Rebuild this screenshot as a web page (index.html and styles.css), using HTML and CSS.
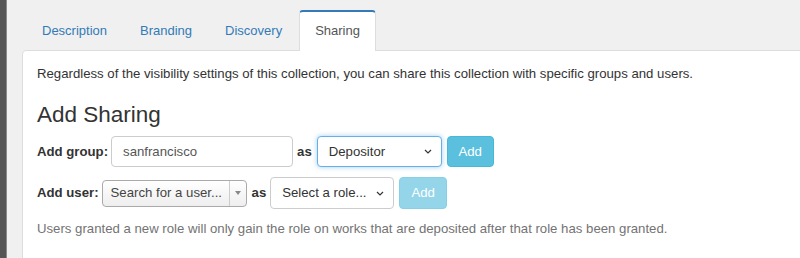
FILE: index.html
```html
<!DOCTYPE html>
<html>
<head>
<meta charset="utf-8">
<link rel="stylesheet" href="styles.css">
</head>
<body>
<div class="sidebar"></div>
<div class="main">
  <ul class="tabs">
    <li class="tab"><a>Description</a></li>
    <li class="tab"><a>Branding</a></li>
    <li class="tab"><a>Discovery</a></li>
    <li class="tab active"><a>Sharing</a></li>
  </ul>
  <div class="panel">
    <p class="intro">Regardless of the visibility settings of this collection, you can share this collection with specific groups and users.</p>
    <h3 class="title">Add Sharing</h3>
    <div class="row row-group">
      <label class="lbl">Add group:</label>
      <div class="input group-input">sanfrancisco</div>
      <span class="lbl">as</span>
      <div class="select focus role-group"><span>Depositor</span>
        <svg class="chev" width="8" height="5" viewBox="0 0 8 5"><path d="M1 1 L4 4 L7 1" fill="none" stroke="#333" stroke-width="1.2"/></svg>
      </div>
      <button class="btn">Add</button>
    </div>
    <div class="row row-user">
      <label class="lbl">Add user:</label>
      <div class="s2"><span class="s2-text">Search for a user...</span><span class="s2-arrow"><svg width="6" height="4" viewBox="0 0 6 4"><path d="M0 0 L6 0 L3 4 Z" fill="#888"/></svg></span></div>
      <span class="lbl as-user">as</span>
      <div class="select role-user"><span>Select a role...</span>
        <svg class="chev" width="8" height="5" viewBox="0 0 8 5"><path d="M1 1 L4 4 L7 1" fill="none" stroke="#333" stroke-width="1.2"/></svg>
      </div>
      <button class="btn disabled">Add</button>
    </div>
    <p class="help">Users granted a new role will only gain the role on works that are deposited after that role has been granted.</p>
  </div>
</div>
</body>
</html>
```
FILE: styles.css
```css
html, body {
  margin: 0;
  height: 258px;
  overflow: hidden;
}
body {
  display: flex;
  font-family: "Liberation Sans", Arial, sans-serif;
  font-size: 13.2px;
  line-height: 18px;
  color: #333;
  background: #f0f0f0;
}
.sidebar {
  width: 6px;
  flex: none;
  background: #555;
  border-right: 1px solid #8a8a8a;
}
.main {
  flex: 1;
  padding: 10px 0 0 15px;
  overflow: hidden;
}
.tabs {
  list-style: none;
  margin: 0 0 -1px 0;
  padding: 0 0 0 4px;
  display: flex;
  gap: 1px;
  font-size: 13px;
}
.tab a {
  display: block;
  padding: 10px 15px 11px;
  color: #337ab7;
  border: 1px solid transparent;
  border-top: 2px solid transparent;
  border-bottom: 0;
  border-radius: 4px 4px 0 0;
}
.tab.active a {
  color: #555;
  background: #fff;
  border-color: #ddd;
  border-top-color: #337ab7;
  position: relative;
  z-index: 1;
}
.panel {
  background: #fff;
  border: 1px solid #ddd;
  border-radius: 4px 0 0 0;
  margin-right: -20px;
  min-height: 300px;
  padding: 14px 14px;
}
.intro {
  margin: 0;
}
.title {
  margin: 19px 0 9px;
  font-size: 22.5px;
  font-weight: 400;
  line-height: 25px;
}
.row {
  display: flex;
  align-items: center;
  gap: 4px;
  height: 31px;
}
.row-user {
  margin-top: 10px;
  height: 32px;
}
.lbl {
  font-weight: bold;
}
.as-user {
  margin-left: 1px;
}
.input, .select {
  box-sizing: border-box;
  height: 31px;
  border: 1px solid #ccc;
  border-radius: 4px;
  padding: 6px 11px;
  background: #fff;
  color: #555;
  display: flex;
  align-items: center;
}
.row-user .select {
  height: 32px;
}
.group-input {
  width: 182px;
  margin-left: -1px;
}
.select {
  justify-content: space-between;
  color: #333;
}
.select.focus {
  border-color: #66afe9;
  box-shadow: 0 0 5px rgba(102,175,233,.6);
}
.role-group {
  width: 125px;
  margin-left: 1px;
}
.role-user {
  width: 124px;
}
.chev {
  margin-right: -2px;
}
.btn {
  font: inherit;
  height: 31px;
  box-sizing: border-box;
  width: 47px;
  border: 1px solid #46b8da;
  background: #5bc0de;
  color: #fff;
  border-radius: 4px;
  padding: 0;
  margin-left: 1px;
}
.btn.disabled {
  opacity: .65;
  height: 32px;
  width: 48px;
  margin-left: 1px;
}
.s2 {
  box-sizing: border-box;
  width: 145px;
  height: 27px;
  border: 1px solid #aaa;
  border-radius: 4px;
  background: linear-gradient(#fff 0%, #eee 100%);
  display: flex;
  align-items: stretch;
  margin-left: -1px;
  color: #444;
}
.s2-text {
  flex: 1;
  padding-left: 8px;
  display: flex;
  align-items: center;
}
.s2-arrow {
  width: 16px;
  border-left: 1px solid #ccc;
  display: flex;
  align-items: center;
  justify-content: center;
}
.help {
  margin: 11px 0 0;
  color: #737373;
}
```
